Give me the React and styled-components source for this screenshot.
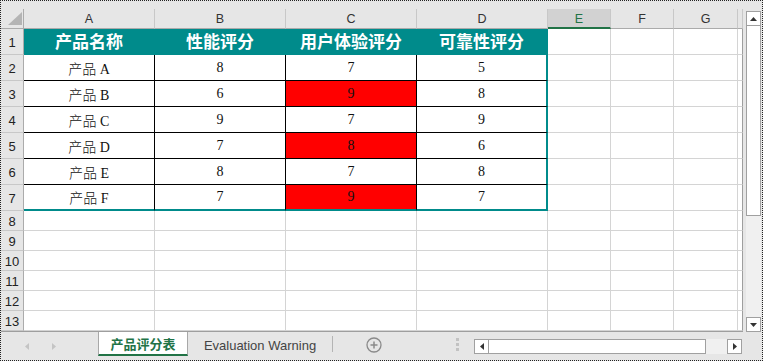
import styled, { createGlobalStyle, css } from 'styled-components'

const GlobalStyle = createGlobalStyle`
  html, body { margin: 0; padding: 0; background: #fff; }
  * { box-sizing: border-box; }
`

const TEAL = '#008b8b'
const GRID = '#d4d4d4'
const EXCEL_GREEN = '#217346'
const CJK = `"Noto Sans CJK SC", sans-serif`

const Frame = styled.div`
  width: 763px;
  height: 361px;
  border: 1px dotted #222;
  background: #e6e6e6;
  display: flex;
  flex-direction: column;
  overflow: hidden;
`

const TopStrip = styled.div`
  height: 8px;
  flex: none;
`

const Main = styled.div`
  display: flex;
  height: 323px;
  flex: none;
`

const Sheet = styled.div`
  width: 742px;
  flex: none;
  display: grid;
  grid-template-columns: 23px repeat(4, 131px) 63px 63px 64px 5px;
  grid-template-rows: 20px repeat(7, 26px) repeat(6, 20px);
  border-bottom: 1px solid #9e9e9e;
  background: #fff;
`

const Corner = styled.div`
  background: #e6e6e6;
  border-right: 1px solid #ababab;
  border-bottom: 1px solid #ababab;
  display: flex;
  align-items: flex-end;
  justify-content: flex-end;
  padding: 0 1px 3px 0;
`

const ColHead = styled.div`
  background: ${(p) => (p.$selected ? '#d2d2d2' : '#e6e6e6')};
  border-right: 1px solid #c8c8c8;
  border-bottom: ${(p) => (p.$selected ? `2px solid ${EXCEL_GREEN}` : '1px solid #ababab')};
  color: ${(p) => (p.$selected ? EXCEL_GREEN : '#333')};
  font: 12.5px "Liberation Sans", Arial, sans-serif;
  display: flex;
  align-items: center;
  justify-content: center;
  padding-top: 1px;
`

const RowHead = styled.div`
  background: #e6e6e6;
  border-right: 1px solid #ababab;
  border-bottom: 1px solid #c8c8c8;
  color: #222;
  font: 13px "Liberation Sans", Arial, sans-serif;
  display: flex;
  align-items: center;
  justify-content: center;
  padding-top: 2px;
`

const Cell = styled.div`
  display: flex;
  align-items: center;
  justify-content: center;
  line-height: 1;
  background: #fff;
  border-right: 1px solid ${GRID};
  border-bottom: 1px solid ${GRID};

  ${(p) =>
    p.$kind === 'title' &&
    css`
      background: ${TEAL};
      color: #fff;
      font: bold 17px ${CJK};
      border-right: ${p.$lastCol ? 2 : 1}px solid ${TEAL};
      border-bottom: 1px solid ${TEAL};
      padding-bottom: 2px;
    `}

  ${(p) =>
    p.$kind === 'data' &&
    css`
      background: ${p.$red ? '#ff0000' : '#fff'};
      color: #111;
      font: 300 14px "Liberation Serif", ${CJK};
      border-right: ${p.$lastCol ? `2px solid ${TEAL}` : '1px solid #000'};
      border-bottom: ${p.$lastRow ? `2px solid ${TEAL}` : '1px solid #000'};
    `}

  ${(p) =>
    p.$kind === 'stub' &&
    css`
      border-right: 1px solid #9e9e9e;
    `}
`

const VScroll = styled.div`
  width: 19px;
  flex: none;
  display: flex;
  flex-direction: column;
  padding: 2px 1px 0 3px;
`

const ScrollButton = styled.div`
  width: 15px;
  height: 15px;
  flex: none;
  border: 1px solid #a0a0a0;
  background: #fff;
  display: flex;
  align-items: center;
  justify-content: center;
`

const VThumb = styled.div`
  height: 190px;
  flex: none;
  border: 1px solid #a0a0a0;
  border-top: none;
  background: #fff;
`

const VTrack = styled.div`
  flex: 1;
  background: #f0f0f0;
`

const TabBar = styled.div`
  height: 28px;
  flex: none;
  display: flex;
  align-items: flex-start;
`

const Nav = styled.div`
  width: 97px;
  height: 100%;
  display: flex;
  align-items: center;
  gap: 23px;
  padding-left: 24px;
`

const ActiveTab = styled.div`
  width: 90px;
  height: 24px;
  background: #fff;
  border-left: 1px solid #a8a8a8;
  border-right: 1px solid #a8a8a8;
  border-bottom: 2px solid ${EXCEL_GREEN};
  color: ${EXCEL_GREEN};
  font: bold 13px ${CJK};
  display: flex;
  align-items: center;
  justify-content: center;
  padding-top: 1px;
`

const Tab = styled.div`
  width: 144px;
  height: 100%;
  color: #444;
  font: 13px "Liberation Sans", Arial, sans-serif;
  display: flex;
  align-items: center;
  justify-content: center;
  padding-bottom: 2px;
`

const Separator = styled.div`
  width: 1px;
  height: 16px;
  margin-top: 4px;
  background: #b4b4b4;
`

const AddArea = styled.div`
  width: 82px;
  height: 100%;
  display: flex;
  align-items: center;
  justify-content: center;
  padding-bottom: 2px;
`

const Dots = styled.div`
  width: 3px;
  height: 100%;
  margin-left: 41px;
  display: flex;
  flex-direction: column;
  justify-content: center;
  gap: 2px;
  padding-bottom: 3px;

  span {
    width: 3px;
    height: 3px;
    background: #c2c2c2;
  }
`

const HScroll = styled.div`
  width: 268px;
  height: 15px;
  margin: 7px 0 0 15px;
  display: flex;
`

const HThumb = styled.div`
  width: 218px;
  border: 1px solid #a0a0a0;
  border-left: none;
  background: #fff;
`

const HTrack = styled.div`
  width: 21px;
  background: #f0f0f0;
`

const Arrow = ({ dir, color = '#333' }) => {
  const pts = {
    up: '0,4 7,4 3.5,0',
    down: '0,0 7,0 3.5,4',
    left: '4,0 4,7 0,3.5',
    right: '0,0 0,7 4,3.5',
  }[dir]
  const vertical = dir === 'up' || dir === 'down'
  return (
    <svg width={vertical ? 7 : 4} height={vertical ? 4 : 7} viewBox={vertical ? '0 0 7 4' : '0 0 4 7'}>
      <polygon points={pts} fill={color} />
    </svg>
  )
}

const columns = ['A', 'B', 'C', 'D', 'E', 'F', 'G']
const titles = ['产品名称', '性能评分', '用户体验评分', '可靠性评分']
const products = [
  ['产品 A', 8, 7, 5],
  ['产品 B', 6, 9, 8],
  ['产品 C', 9, 7, 9],
  ['产品 D', 7, 8, 6],
  ['产品 E', 8, 7, 8],
  ['产品 F', 7, 9, 7],
]
const redCells = { 1: true, 3: true, 5: true }

const App = () => {
  const rows = []
  for (let r = 1; r <= 13; r++) {
    rows.push(<RowHead key={`rh${r}`}>{r}</RowHead>)
    for (let c = 0; c < 7; c++) {
      const key = `c${r}-${c}`
      if (r === 1 && c < 4) {
        rows.push(
          <Cell key={key} $kind="title" $lastCol={c === 3}>
            {titles[c]}
          </Cell>
        )
      } else if (r >= 2 && r <= 7 && c < 4) {
        const i = r - 2
        rows.push(
          <Cell key={key} $kind="data" $lastCol={c === 3} $lastRow={r === 7} $red={c === 2 && redCells[i]}>
            {products[i][c]}
          </Cell>
        )
      } else {
        rows.push(<Cell key={key} />)
      }
    }
    rows.push(<Cell key={`s${r}`} $kind="stub" />)
  }

  return (
    <>
      <GlobalStyle />
      <Frame>
        <TopStrip />
        <Main>
          <Sheet>
            <Corner>
              <svg width="14" height="13" viewBox="0 0 14 13">
                <polygon points="14,0 14,13 0,13" fill="#b4b4b4" />
              </svg>
            </Corner>
            {columns.map((col) => (
              <ColHead key={col} $selected={col === 'E'}>
                {col}
              </ColHead>
            ))}
            <ColHead />
            {rows}
          </Sheet>
          <VScroll>
            <ScrollButton>
              <Arrow dir="up" />
            </ScrollButton>
            <VThumb />
            <VTrack />
            <ScrollButton>
              <Arrow dir="down" />
            </ScrollButton>
          </VScroll>
        </Main>
        <TabBar>
          <Nav>
            <Arrow dir="left" color="#c4c4c4" />
            <Arrow dir="right" color="#c4c4c4" />
          </Nav>
          <ActiveTab>产品评分表</ActiveTab>
          <Tab>Evaluation Warning</Tab>
          <Separator />
          <AddArea>
            <svg width="16" height="16" viewBox="0 0 16 16">
              <circle cx="8" cy="8" r="7" fill="none" stroke="#8a8a8a" strokeWidth="1.3" />
              <path d="M8 4.5v7M4.5 8h7" stroke="#8a8a8a" strokeWidth="1.5" />
            </svg>
          </AddArea>
          <Dots>
            <span />
            <span />
            <span />
          </Dots>
          <HScroll>
            <ScrollButton>
              <Arrow dir="left" />
            </ScrollButton>
            <HThumb />
            <HTrack />
            <ScrollButton>
              <Arrow dir="right" />
            </ScrollButton>
          </HScroll>
        </TabBar>
      </Frame>
    </>
  )
}

export default App
